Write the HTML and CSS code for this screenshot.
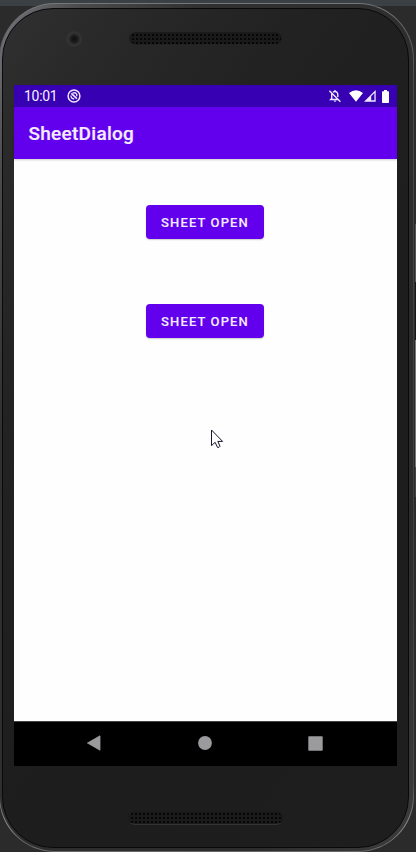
FILE: index.html
```html
<!DOCTYPE html>
<html lang="en">
<head>
<meta charset="utf-8">
<title>SheetDialog</title>
<link rel="stylesheet" href="styles.css">
</head>
<body>
<div class="phone">
  <div class="rim">
  <div class="body">
    <div class="top-bezel">
      <span class="camera"></span>
      <span class="speaker"></span>
    </div>
    <main class="screen">
      <div class="status">
        <span class="time">10:01</span>
        <svg class="debug" width="14" height="14" viewBox="0 0 14 14" fill="none" stroke="#eee8ff"><circle cx="7" cy="7" r="5.9" stroke-width="1.5"/><path d="M4.3 4.3l5.6 5.4" stroke-width="1.6"/><path d="M5.6 4.1Q8.6 3 9.8 5.6V7.2M3.9 6.6Q4 9.8 7.2 10" stroke-width="1.3"/></svg>
        <span class="spacer"></span>
        <svg class="bell" width="14" height="14" viewBox="0 0 14 14" fill="none" stroke="#eee8ff" stroke-width="1.4"><path d="M3.7 4.7v4.8L2.7 10.5h7.8M4.9 3.3Q7 1.8 9 3.4q.8 1 .8 2.5v2M7 1v1.5M1.4 1.8l11 11"/><path d="M5.7 11.4h2.6q-.2 1.3-1.3 1.3t-1.3-1.3z" fill="#eee8ff" stroke="none"/></svg>
        <svg class="wifi" width="14" height="12" viewBox="0 0 14 12"><path d="M0 3Q7-2.7 14 3L7 11.8z" fill="#fff"/></svg>
        <svg class="cell" width="12" height="12" viewBox="0 0 12 12"><path d="M11.7.1V11.7H0z" fill="#eee8ff"/><path d="M7.2 6.3L10.4 3v7.3H7.2z" fill="#3700b3"/></svg>
        <svg class="battery" width="7" height="13" viewBox="0 0 7 13"><path d="M2 0h3v1.3h1.3q.7 0 .7.7v10.3q0 .7-.7.7H.7q-.7 0-.7-.7V2q0-.7.7-.7H2z" fill="#fff"/></svg>
      </div>
      <header class="appbar">SheetDialog</header>
      <section class="content">
        <button class="btn">SHEET OPEN</button>
        <button class="btn">SHEET OPEN</button>
      </section>
      <nav class="nav">
        <svg width="14" height="16" viewBox="0 0 14 16"><path d="M.4 8L13 .8v14.4z" fill="#9b9b9e" stroke="#9b9b9e" stroke-width=".8" stroke-linejoin="round"/></svg>
        <svg width="14" height="14" viewBox="0 0 14 14"><circle cx="7" cy="7" r="6.9" fill="#9b9b9e"/></svg>
        <svg width="15" height="15" viewBox="0 0 15 15"><rect x=".3" y=".3" width="14.4" height="14.4" rx=".7" fill="#9b9b9e"/></svg>
      </nav>
    </main>
    <div class="bottom-bezel"><span class="speaker"></span></div>
  </div>
  </div>
</div>
<span class="side-keys"></span>
<svg class="cursor" width="14" height="21" viewBox="0 0 14 21"><path d="M1.5 1v15.6l3.6-3.3 2.4 5.1q1.9.3 2.5-1.1l-2.2-4.9h4.8z" fill="#fff" stroke="#16142c" stroke-width="1"/></svg>
</body>
</html>
```

FILE: styles.css
```css
* { box-sizing: border-box; }
body {
  margin: 0;
  height: 852px;
  overflow: hidden;
  position: relative;
  padding-top: 3px;
  background: linear-gradient(#3b4044 6px, #2b2b2b 6px);
  font-family: Roboto, "Liberation Sans", sans-serif;
}
.phone {
  width: 415px;
  height: 849px;
  margin-left: -1px;
  padding: 1px;
  border-radius: 56px;
  background: linear-gradient(to bottom, #777 0, #666 30px, #4a4a4a 80px, #3c3c3c 400px, #4a4a4a 780px, #888 820px, #666);
}
.rim {
  height: 100%;
  padding: 4px 4px 3px 2px;
  border-radius: 55px;
  background: linear-gradient(115deg, #777880 0, #4a4a4b 10%, #303030 25%, #2c2c2c 80%, #3c3c3c);
}
.body {
  height: 100%;
  display: flex;
  flex-direction: column;
  padding: 0 10px 0 11px;
  border: 1px solid #090909;
  border-radius: 51px;
  background: linear-gradient(125deg, #303030 0, #292929 12%, #222 30%, #1d1d1d 60%, #1e1e1e);
}
.top-bezel {
  height: 76px;
  flex: none;
  display: flex;
  align-items: flex-start;
}
.camera {
  width: 16px;
  height: 16px;
  margin: 22px 0 0 52px;
  border-radius: 50%;
  background: radial-gradient(circle at 52% 50%, #0e0e0e 0, #1b1b1b 3px, #292929 5px, #343434 6px, #303030 8px);
}
.speaker {
  width: 153px;
  height: 13px;
  border-radius: 7px;
  border: 1px solid #1b1b1b;
  border-bottom-color: #222;
  background: radial-gradient(circle, #060606 .8px, #1a1a1a 1.4px) 1px 0 / 4px 4px;
}
.top-bezel .speaker { margin: 23px 0 0 47px; }
.screen {
  width: 383px;
  height: 681px;
  flex: none;
  display: flex;
  flex-direction: column;
  background: #fefefe;
}
.status {
  height: 22px;
  display: flex;
  align-items: center;
  padding: 0 8px 0 10px;
  background: #3700b3;
  color: #f6f2ff;
}
.time { width: 43px; font-size: 14px; letter-spacing: -.3px; line-height: 22px; }
.spacer { flex: 1; }
.bell { margin-right: 7px; }
.wifi { margin-right: 1px; }
.cell { margin-right: 6px; }
.appbar {
  height: 52px;
  padding: 1px 14.5px 0;
  background: #6200ee;
  color: #f3edff;
  font-size: 19px;
  font-weight: 500;
  letter-spacing: .27px;
  line-height: 52px;
  -webkit-text-stroke: .2px #f3edff;
  box-shadow: 0 1px 2px rgba(0, 0, 0, .2);
}
.content {
  flex: 1;
  display: flex;
  flex-direction: column;
  align-items: flex-start;
  gap: 65px;
  padding: 46px 0 0 132px;
}
.btn {
  width: 118px;
  height: 34px;
  padding: 1px 0 0;
  border: 0;
  border-radius: 4px;
  background: #6200ee;
  color: #f3edff;
  font: 500 13px/33px Roboto, "Liberation Sans", sans-serif;
  letter-spacing: 1.13px;
  -webkit-text-stroke: .1px #f3edff;
  box-shadow: 0 1px 1.5px rgba(0, 0, 0, .2);
}
.nav {
  height: 45px;
  display: flex;
  align-items: center;
  justify-content: space-between;
  padding: 0 74px 2px 73px;
  background: #000;
  border-top: 1px solid #444;
}
.bottom-bezel { flex: 1; padding: 45px 0 0 114px; }
.bottom-bezel .speaker { display: block; width: 155px; height: 14px; border-bottom-color: #333; }
.side-keys {
  position: absolute;
  right: 0;
  top: 138px;
  width: 1px;
  height: 359px;
  background: linear-gradient(#2b2b2b 86px, #555 86px 144px, #181818 144px 202px, #7a7678 202px 329px, #444 329px);
}
.cursor { position: absolute; left: 210px; top: 429px; }
```
